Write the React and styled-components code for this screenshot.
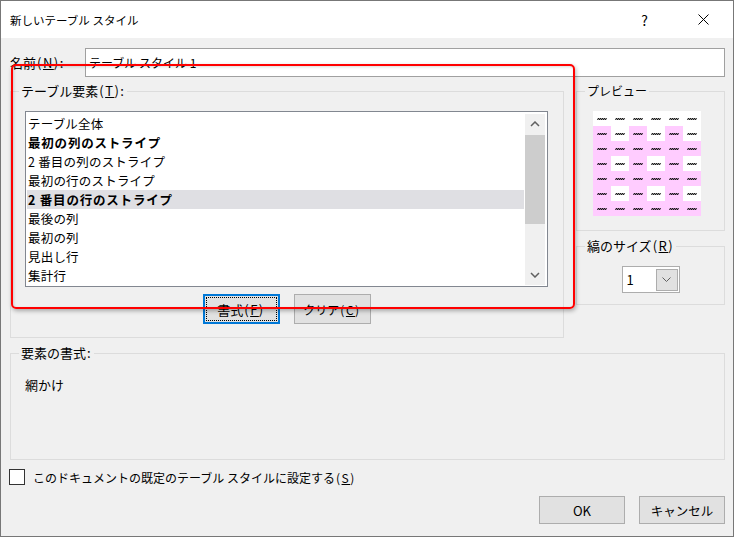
import React from 'react';
import styled, { createGlobalStyle } from 'styled-components';

const GlobalStyle = createGlobalStyle`
  html, body {
    margin: 0;
    padding: 0;
    background: #fff;
  }
  body {
    font-family: "Noto Sans CJK JP", "Noto Sans", sans-serif;
    font-size: 13px;
    color: #000;
  }
`;

const Window = styled.div`
  position: relative;
  width: 734px;
  height: 537px;
  box-sizing: border-box;
  border: 1px solid #777;
  background: #f0f0f0;
  display: flex;
  flex-direction: column;
`;

const TitleBar = styled.div`
  height: 37px;
  background: #fff;
  display: flex;
  align-items: center;
  padding-left: 9px;
`;

const Title = styled.div`
  flex: 1;
  font-size: 11.5px;
`;

const TitleButton = styled.div`
  width: 59px;
  height: 100%;
  display: flex;
  align-items: center;
  justify-content: center;
  font-size: 14px;
`;

const Body = styled.div`
  padding: 10px 8px 0 9px;
  display: flex;
  flex-direction: column;
`;

const Mn = styled.span`
  letter-spacing: 1.5px;
  margin-left: 1px;
`;

const NameRow = styled.div`
  display: flex;
  align-items: center;
  height: 29px;
`;

const NameLabel = styled.div`
  width: 75px;
`;

const TextInput = styled.div`
  flex: 1;
  height: 29px;
  box-sizing: border-box;
  border: 1px solid #a0a0a0;
  background: #fff;
  padding-left: 3px;
  display: flex;
  align-items: center;
  font-size: 12px;
`;

const MainRow = styled.div`
  display: flex;
  gap: 12px;
  margin-top: 6px;
`;

const Group = styled.fieldset`
  margin: 0;
  padding: 0;
  min-width: 0;
  box-sizing: border-box;
  border: 1px solid #dcdcdc;
  width: ${p => p.$w};
  height: ${p => p.$h}px;
  margin-top: ${p => p.$mt || 0}px;
`;

const Legend = styled.legend`
  margin-left: 8px;
  padding: 0 2px;
  line-height: 16px;
  font-size: ${p => p.$size || 13}px;
`;

const GroupInner = styled.div`
  padding: ${p => p.$pad};
  display: flex;
  flex-direction: column;
  align-items: ${p => p.$align || 'flex-start'};
`;

const ListBox = styled.div`
  width: 523px;
  height: 176px;
  box-sizing: border-box;
  border: 1px solid #828790;
  background: #fff;
  padding: 2px 2px 1px 1px;
  display: flex;
`;

const Items = styled.div`
  flex: 1;
  overflow: hidden;
`;

const Item = styled.div`
  height: 19px;
  line-height: 19px;
  padding-left: 1px;
  white-space: nowrap;
  font-size: 12.5px;
  font-weight: ${p => (p.$bold ? 700 : 400)};
  letter-spacing: ${p => (p.$bold ? '0.8px' : '0.2px')};
  background: ${p => (p.$selected ? '#dfdfe3' : 'transparent')};
`;

const ScrollBar = styled.div`
  width: 20px;
  margin-left: 1px;
  background: #f0f0f0;
  display: flex;
  flex-direction: column;
`;

const ScrollArrow = styled.div`
  height: 20px;
  display: flex;
  align-items: center;
  justify-content: center;
`;

const Track = styled.div`
  flex: 1;
`;

const Thumb = styled.div`
  margin-top: 1px;
  height: 89px;
  background: #cdcdcd;
`;

const ButtonRow = styled.div`
  display: flex;
  justify-content: ${p => p.$justify || 'center'};
  gap: 14px;
  width: ${p => p.$w || 'auto'};
  margin-top: ${p => p.$mt || 0}px;
`;

const Button = styled.button`
  position: relative;
  width: ${p => p.$w}px;
  height: ${p => p.$h}px;
  box-sizing: border-box;
  padding: 0;
  font-family: inherit;
  font-size: ${p => p.$size || 13}px;
  color: #000;
  background: #e1e1e1;
  border: ${p => (p.$focused ? '2px solid #0078d7' : '1px solid #adadad')};
  &::after {
    content: '';
    display: ${p => (p.$focused ? 'block' : 'none')};
    position: absolute;
    inset: 1px;
    border: 1px dotted #000;
  }
`;

const SideColumn = styled.div`
  width: 149px;
  display: flex;
  flex-direction: column;
  gap: 7px;
`;

const PreviewGrid = styled.div`
  display: grid;
  grid-template-columns: repeat(6, 18px);
  grid-auto-rows: 15px;
`;

const Cell = styled.div`
  background: ${p => (p.$pink ? '#ffccff' : '#fff')};
  display: flex;
  align-items: center;
  justify-content: center;
`;

const Select = styled.div`
  width: 58px;
  height: 27px;
  box-sizing: border-box;
  border: 1px solid #adadad;
  background: #fff;
  display: flex;
  align-items: center;
  padding: 2px 1px 2px 4px;
`;

const SelectValue = styled.div`
  flex: 1;
`;

const DropButton = styled.div`
  width: 22px;
  height: 22px;
  box-sizing: border-box;
  border: 1px solid #adadad;
  background: #e1e1e1;
  display: flex;
  align-items: center;
  justify-content: center;
`;

const CheckRow = styled.div`
  display: flex;
  align-items: center;
  gap: 8px;
  margin-top: 9px;
  margin-left: -1px;
  height: 16px;
  font-size: 12px;
`;

const CheckBox = styled.div`
  width: 16px;
  height: 16px;
  box-sizing: border-box;
  border: 1px solid #333;
  background: #fff;
`;

const Annotation = styled.div`
  position: absolute;
  left: 10px;
  top: 63px;
  width: 564px;
  height: 245px;
  box-sizing: border-box;
  border: 2px solid #ff0000;
  border-radius: 5px;
  box-shadow: 1px 2px 4px rgba(0, 0, 0, 0.3), inset 1px 1px 3px rgba(0, 0, 0, 0.15);
  pointer-events: none;
`;

const Chevron = ({ up }) => (
  <svg width="10" height="6" viewBox="0 0 10 6">
    <polyline
      points={up ? '1,5 5,1 9,5' : '1,1 5,5 9,1'}
      fill="none"
      stroke="#606060"
      strokeWidth="1.5"
    />
  </svg>
);

const Squiggle = () => (
  <svg width="10" height="4" viewBox="0 0 10 4">
    <polyline
      points="0.5,3 1.5,1 2.5,3 3.5,1 4.5,3 5.5,1 6.5,3 7.5,1 8.5,3 9.5,1"
      fill="none"
      stroke="#000"
      strokeWidth="0.9"
    />
  </svg>
);

const items = [
  { label: 'テーブル全体' },
  { label: '最初の列のストライプ', bold: true },
  { label: '2 番目の列のストライプ' },
  { label: '最初の行のストライプ' },
  { label: '2 番目の行のストライプ', bold: true, selected: true },
  { label: '最後の列' },
  { label: '最初の列' },
  { label: '見出し行' },
  { label: '集計行' },
];

const isPink = (row, col) => row > 0 && (row % 2 === 0 || col % 2 === 0);

export default function App() {
  return (
    <>
      <GlobalStyle />
      <Window>
        <TitleBar>
          <Title>新しいテーブル スタイル</Title>
          <TitleButton>?</TitleButton>
          <TitleButton>
            <svg width="11" height="11" viewBox="0 0 11 11">
              <path d="M0.5 0.5 L10.5 10.5 M10.5 0.5 L0.5 10.5" stroke="#000" strokeWidth="1" />
            </svg>
          </TitleButton>
        </TitleBar>

        <Body>
          <NameRow>
            <NameLabel>名前<Mn>(<u>N</u>):</Mn></NameLabel>
            <TextInput>テーブル スタイル 1</TextInput>
          </NameRow>

          <MainRow>
            <Group $w="554px" $h={255}>
              <Legend>テーブル要素<Mn>(<u>T</u>):</Mn></Legend>
              <GroupInner $pad="12px 0 0 14px">
                <ListBox>
                  <Items>
                    {items.map(it => (
                      <Item key={it.label} $bold={it.bold} $selected={it.selected}>
                        {it.label}
                      </Item>
                    ))}
                  </Items>
                  <ScrollBar>
                    <ScrollArrow>
                      <Chevron up />
                    </ScrollArrow>
                    <Track>
                      <Thumb />
                    </Track>
                    <ScrollArrow>
                      <Chevron />
                    </ScrollArrow>
                  </ScrollBar>
                </ListBox>
                <ButtonRow $w="523px" $mt={7}>
                  <Button $w={77} $h={30} $focused>
                    書式<Mn>(<u>F</u>)</Mn>
                  </Button>
                  <Button $w={77} $h={30} $size={12}>
                    クリア<Mn>(<u>C</u>)</Mn>
                  </Button>
                </ButtonRow>
              </GroupInner>
            </Group>

            <SideColumn>
              <Group $w="149px" $h={148}>
                <Legend $size={12}>プレビュー</Legend>
                <GroupInner $pad="12px 0 0 16px">
                  <PreviewGrid>
                    {Array.from({ length: 7 }).map((_, r) =>
                      Array.from({ length: 6 }).map((__, c) => (
                        <Cell key={`${r}-${c}`} $pink={isPink(r, c)}>
                          <Squiggle />
                        </Cell>
                      ))
                    )}
                  </PreviewGrid>
                </GroupInner>
              </Group>
              <Group $w="149px" $h={67}>
                <Legend>縞のサイズ<Mn>(<u>R</u>)</Mn></Legend>
                <GroupInner $pad="12px 0 0 0" $align="center">
                  <Select>
                    <SelectValue>1</SelectValue>
                    <DropButton>
                      <svg width="9" height="5" viewBox="0 0 9 5">
                        <polyline points="0.5,0.5 4.5,4.5 8.5,0.5" fill="none" stroke="#606060" strokeWidth="1" />
                      </svg>
                    </DropButton>
                  </Select>
                </GroupInner>
              </Group>
            </SideColumn>
          </MainRow>

          <Group $w="715px" $h={115} $mt={7}>
            <Legend>要素の書式<Mn>:</Mn></Legend>
            <GroupInner $pad="14px 0 0 14px">網かけ</GroupInner>
          </Group>

          <CheckRow>
            <CheckBox />
            <span>このドキュメントの既定のテーブル スタイルに設定する<Mn>(<u>S</u>)</Mn></span>
          </CheckRow>

          <ButtonRow $justify="flex-end" $mt={11}>
            <Button $w={86} $h={28}>OK</Button>
            <Button $w={86} $h={28} $size={12.5}>キャンセル</Button>
          </ButtonRow>
        </Body>

        <Annotation />
      </Window>
    </>
  );
}
